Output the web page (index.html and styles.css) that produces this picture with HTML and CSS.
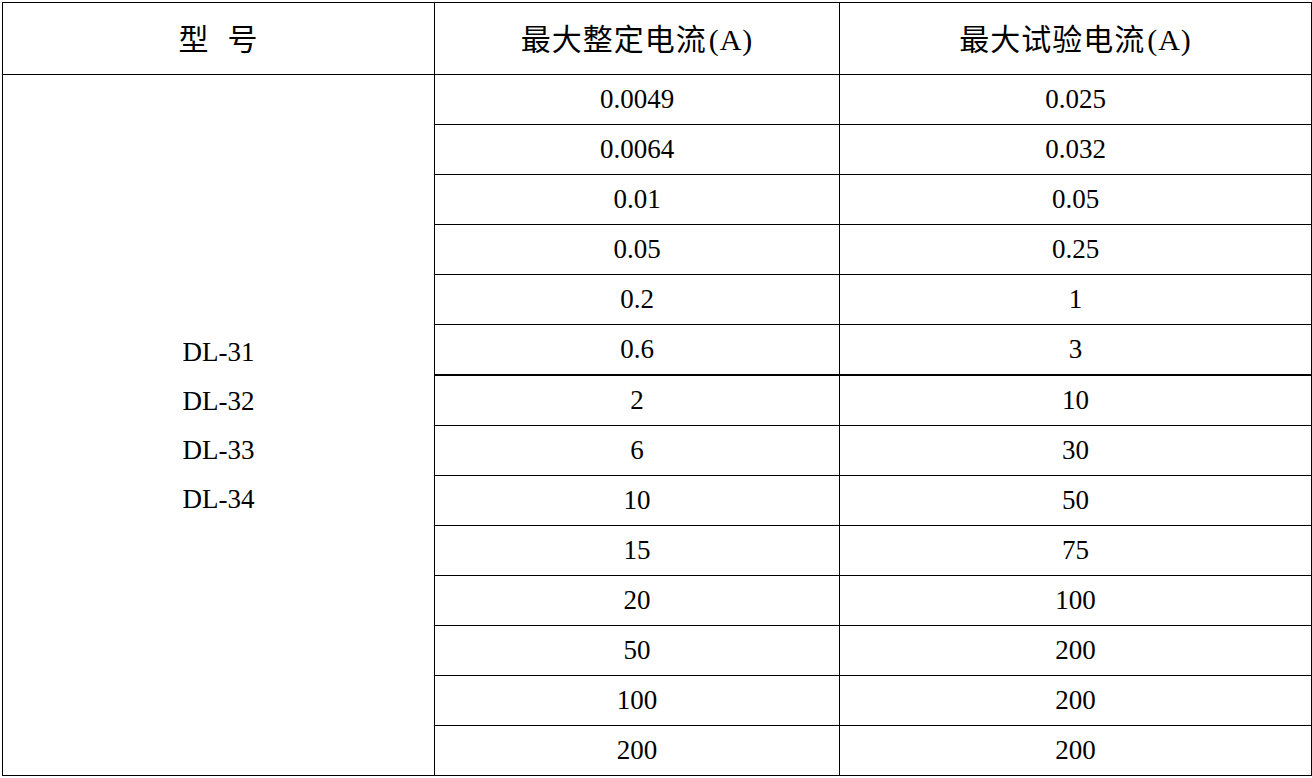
FILE: index.html
```html
<!DOCTYPE html>
<html lang="zh">
<head>
<meta charset="utf-8">
<link rel="stylesheet" href="styles.css">
</head>
<body>
<table class="spec">
  <colgroup>
    <col class="c1"><col class="c2"><col class="c3">
  </colgroup>
  <thead>
    <tr>
      <th><span class="wide">型</span>号</th>
      <th>最大整定电流<span class="lat">(A)</span></th>
      <th>最大试验电流<span class="lat">(A)</span></th>
    </tr>
  </thead>
  <tbody>
    <tr><td class="model" rowspan="14"><div>DL-31</div><div>DL-32</div><div>DL-33</div><div>DL-34</div></td><td>0.0049</td><td>0.025</td></tr>
    <tr><td>0.0064</td><td>0.032</td></tr>
    <tr><td>0.01</td><td>0.05</td></tr>
    <tr><td>0.05</td><td>0.25</td></tr>
    <tr><td>0.2</td><td>1</td></tr>
    <tr><td>0.6</td><td>3</td></tr>
    <tr class="thick"><td>2</td><td>10</td></tr>
    <tr><td>6</td><td>30</td></tr>
    <tr><td>10</td><td>50</td></tr>
    <tr><td>15</td><td>75</td></tr>
    <tr><td>20</td><td>100</td></tr>
    <tr><td>50</td><td>200</td></tr>
    <tr><td>100</td><td>200</td></tr>
    <tr><td>200</td><td>200</td></tr>
  </tbody>
</table>
</body>
</html>
```

FILE: styles.css
```css
html, body {
  margin: 0;
  padding: 0;
  background: #fff;
}

.spec {
  margin: 2px 0 0 2px;
  width: 1309px;
  border-collapse: collapse;
  table-layout: fixed;
  color: #000;
}

.c1 { width: 432px; }
.c2 { width: 405px; }
.c3 { width: 472px; }

.spec th,
.spec td {
  border: 1px solid #000;
  padding: 0;
  text-align: center;
  vertical-align: middle;
}

.spec th {
  height: 68px;
  padding-bottom: 3px;
  font-family: "Noto Sans CJK SC", sans-serif;
  font-size: 30px;
  font-weight: 400;
  letter-spacing: 1px;
}

.wide {
  margin-right: 18px;
}

.lat {
  font-family: "Liberation Serif", serif;
  font-weight: 400;
  letter-spacing: 1px;
  margin-left: 2px;
}

.spec td {
  height: 49px;
  font-family: "Liberation Serif", "Times New Roman", serif;
  font-size: 27px;
}

.spec tr.thick td {
  border-top: 2px solid #000;
}

.spec td.model {
  line-height: 49px;
  padding-top: 2px;
}
```
